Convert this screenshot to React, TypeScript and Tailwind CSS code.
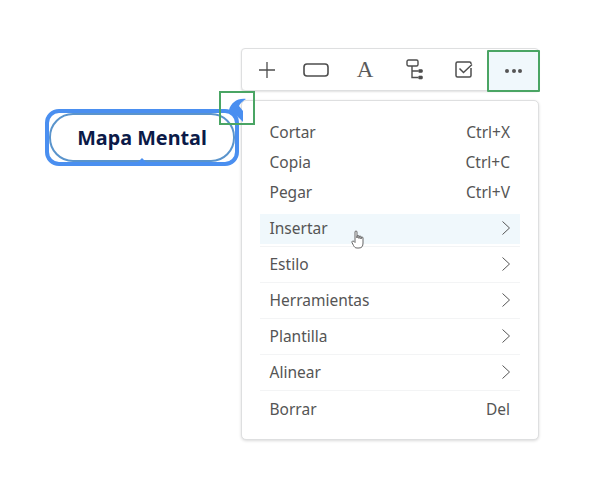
import React from "react";

const Chevron = () => (
  <svg width="12" height="16" viewBox="0 0 12 16" fill="none" stroke="#555" strokeWidth="1" className="mr-[-2px] mb-[2px]">
    <path d="M2.5 1.5 L9.5 8 L2.5 14.5" />
  </svg>
);

const Row = ({ label, hover, sep }: { label: string; hover?: boolean; sep?: boolean }) => (
  <div className={`h-[36px] flex items-center ${sep ? "border-b border-[#f3f4f5]" : ""}`}>
    <div className={`flex-1 h-[30px] pl-[9.5px] pr-[10px] flex items-center justify-between ${hover ? "bg-[#f0f8fc]" : ""}`}>
      <span>{label}</span>
      <Chevron />
    </div>
  </div>
);

const Plain = ({ label, keys, h = "h-[30px]" }: { label: string; keys: string; h?: string }) => (
  <div className={`${h} pl-[9.5px] pr-[10px] flex items-center justify-between`}>
    <span>{label}</span>
    <span>{keys}</span>
  </div>
);

export default function App() {
  return (
    <div className="w-[600px] h-[484px] bg-white overflow-hidden flex items-start pl-[45px] pt-[48px] font-['Noto_Sans',sans-serif]">
      {/* node */}
      <div className="relative z-10 mt-[61px] w-[194px] h-[57px] shrink-0 rounded-[14px] border-[4px] border-[#4a8ff0] bg-white flex">
        <div className="flex-1 rounded-[24px] border-2 border-[#5a94cc] flex items-center justify-center">
          <span className="text-[19.8px] leading-none font-bold text-[#0b1a48]">Mapa Mental</span>
        </div>
        <div className="absolute left-[88px] bottom-[-1px] w-0 h-0 border-x-[5px] border-x-transparent border-b-[5px] border-b-[#4a8ff0]" />
        <svg className="absolute left-[178px] top-[-15px]" width="26" height="30" viewBox="0 0 26 30">
          <path d="M2 12 C4 5 10 0 19 1 C16 3 13 5 12 8 L16 13 L16 24 C12 20 7 15 2 12 Z" fill="#4a8ff0" />
        </svg>
        <div className="absolute left-[170px] top-[-22px] w-[36px] h-[34px] border-2 border-[#4aa564]" />
      </div>

      {/* toolbar + menu */}
      <div className="ml-[2px] w-[298px] shrink-0 flex flex-col gap-[9px]">
        <div className="relative h-[43px] w-[298px] rounded-[4px] bg-white border border-[#dedfe0] shadow-[0_1px_2px_rgba(0,0,0,0.12)] flex items-center">
          <div className="w-[50px] flex justify-center">
            <svg width="18" height="18" viewBox="0 0 18 18" fill="none" stroke="#4d4d4d" strokeWidth="1.3">
              <path d="M9 1 V17 M1 9 H17" />
            </svg>
          </div>
          <div className="w-[48px] flex justify-center">
            <svg width="26" height="14" viewBox="0 0 26 14" fill="none" stroke="#4d4d4d" strokeWidth="1.6">
              <rect x="1" y="1" width="24" height="12" rx="3" />
            </svg>
          </div>
          <div className="w-[50px] flex justify-center">
            <span className="text-[23px] leading-none text-[#5a5a5a] font-['Liberation_Serif',serif]">A</span>
          </div>
          <div className="w-[49px] flex justify-center">
            <svg width="18" height="21" viewBox="0 0 18 21" fill="none" stroke="#4d4d4d" strokeWidth="1.4">
              <rect x="1" y="1" width="11" height="6" rx="1.5" />
              <path d="M6 7 V18.5 H12 M6 12 H12" />
              <rect x="12.5" y="10.5" width="4" height="3" rx="1" fill="#4d4d4d" strokeWidth="0.6" />
              <rect x="12.5" y="17" width="4" height="3" rx="1" fill="#4d4d4d" strokeWidth="0.6" />
            </svg>
          </div>
          <div className="w-[49px] flex justify-center">
            <svg width="18" height="17" viewBox="0 0 18 17" fill="none" stroke="#4d4d4d" strokeWidth="1.5">
              <path d="M16 3 V2.5 A1.5 1.5 0 0 0 14.5 1 H2.5 A1.5 1.5 0 0 0 1 2.5 V14.5 A1.5 1.5 0 0 0 2.5 16 H14.5 A1.5 1.5 0 0 0 16 14.5 V7" />
              <path d="M4.5 7.5 L8.5 11.5 L17 3.5" />
            </svg>
          </div>
          <div className="absolute left-[245px] top-[1px] w-[53px] h-[42px] bg-[#f0f8fc] border-2 border-[#4aa564] rounded-[1px] flex items-center justify-center gap-[2.5px]">
            <span className="w-[4px] h-[4px] rounded-full bg-[#555]" />
            <span className="w-[4px] h-[4px] rounded-full bg-[#555]" />
            <span className="w-[4px] h-[4px] rounded-full bg-[#555]" />
          </div>
        </div>

        <div className="relative w-[298px] h-[340px] rounded-[5px] bg-white border border-[#dedfe0] shadow-[0_1px_3px_rgba(0,0,0,0.15)] px-[18px] pt-[17px] text-[15.5px] text-[#555]">
          <Plain label="Cortar" keys="Ctrl+X" />
          <Plain label="Copia" keys="Ctrl+C" />
          <Plain label="Pegar" keys="Ctrl+V" />
          <div className="h-[3px]" />
          <Row label="Insertar" hover sep />
          <Row label="Estilo" sep />
          <Row label="Herramientas" sep />
          <Row label="Plantilla" sep />
          <Row label="Alinear" sep />
          <Plain label="Borrar" keys="Del" h="h-[38px]" />
          <svg className="absolute left-[109px] top-[129px]" width="14" height="19" viewBox="0 0 14 19" fill="white" stroke="#555" strokeWidth="0.9">
            <path d="M4 11 V2 A1 1 0 0 1 6 2 V8 V6.5 A1 1 0 0 1 8 6.5 V8.5 V7 A1 1 0 0 1 10 7 V9 V8 A1 1 0 0 1 12 8 V13 C12 16 11 18 8 18 H6 C4 18 3.5 17 2.5 15.5 L1 12.5 C0.5 11.2 2 10.5 3 11.5 L4 12.5 Z" />
          </svg>
        </div>
      </div>
    </div>
  );
}
